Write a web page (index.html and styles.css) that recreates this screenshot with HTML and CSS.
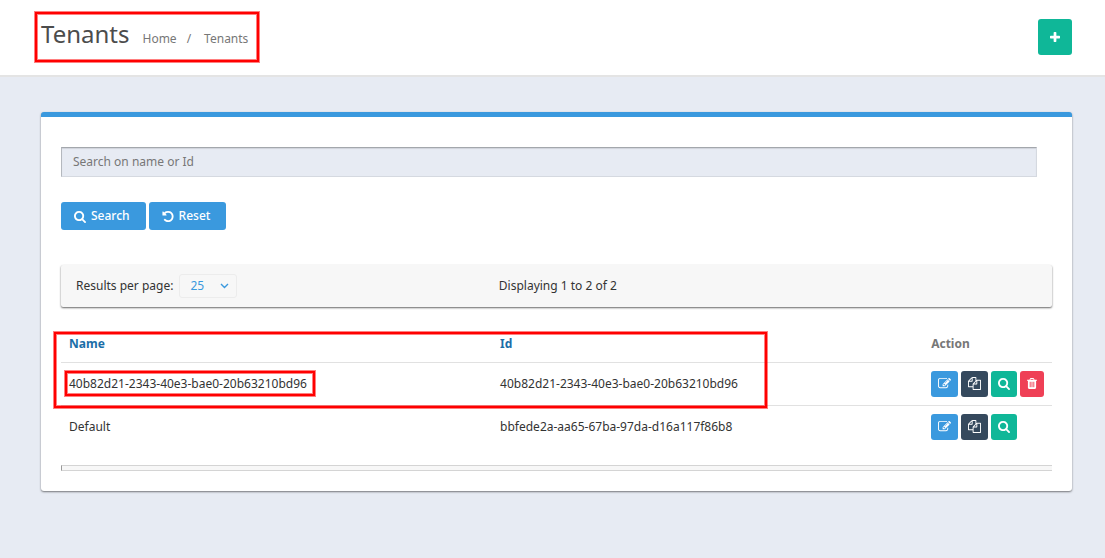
FILE: index.html
```
<!DOCTYPE html>
<html lang="en">
<head>
    <meta charset="UTF-8">
    <title>Tenants</title>
    <link rel="stylesheet" href="styles.css">
</head>
<body>

<!-- icon sprite -->
<svg class="sprite" aria-hidden="true">
    <symbol id="i-plus" viewBox="192 0 1408 1792"><path d="M1600 736v192q0 40-28 68t-68 28h-416v416q0 40-28 68t-68 28h-192q-40 0-68-28t-28-68v-416h-416q-40 0-68-28t-28-68v-192q0-40 28-68t68-28h416v-416q0-40 28-68t68-28h192q40 0 68 28t28 68v416h416q40 0 68 28t28 68z"/></symbol>
    <symbol id="i-search" viewBox="64 0 1664 1792"><path d="M1216 832q0-185-131.500-316.500t-316.500-131.500-316.500 131.500-131.500 316.500 131.500 316.500 316.500 131.500 316.500-131.500 131.500-316.500zm512 832q0 52-38 90t-90 38q-54 0-90-38l-343-342q-179 124-399 124-143 0-273.500-55.500t-225-150-150-225-55.500-273.500 55.500-273.500 150-225 225-150 273.500-55.500 273.500 55.500 225 150 150 225 55.500 273.500q0 220-124 399l343 343q37 37 37 90z"/></symbol>
    <symbol id="i-undo" viewBox="128 0 1536 1792"><path d="M1664 896q0 156-61 298t-164 245-245 164-298 61q-172 0-327-72.500t-264-204.500q-7-10-6.500-22.500t8.500-20.500l137-138q10-9 25-9 16 2 23 12 73 95 179 147t225 52q104 0 198.500-40.500t163.500-109.500 109.500-163.500 40.500-198.500-40.500-198.500-109.500-163.500-163.500-109.500-198.500-40.500q-98 0-188 35.500t-160 101.500l137 138q31 30 14 69-17 40-59 40h-448q-26 0-45-19t-19-45v-448q0-42 40-59 39-17 69 14l130 129q107-101 244.500-156.500t284.500-55.500q156 0 298 61t245 164 164 245 61 298z"/></symbol>
    <symbol id="i-edit" viewBox="0 0 1792 1792"><path d="M888 1184l116-116-152-152-116 116v56h96v96h56zm440-720q-16-16-33 1l-350 350q-17 17-1 33t33-1l350-350q17-17 1-33zm80 594v190q0 119-84.500 203.500t-203.500 84.500h-832q-119 0-203.500-84.500t-84.500-203.500v-832q0-119 84.500-203.500t203.500-84.500h832q63 0 117 25 15 7 18 23 3 17-9 29l-49 49q-14 14-32 8-23-6-45-6h-832q-66 0-113 47t-47 113v832q0 66 47 113t113 47h832q66 0 113-47t47-113v-126q0-13 9-22l64-64q15-15 35-7t20 29zm-96-738l288 288-672 672h-288v-288zm444 132l-92 92-288-288 92-92q28-28 68-28t68 28l152 152q28 28 28 68t-28 68z"/></symbol>
    <symbol id="i-copy" viewBox="0 0 1792 1792"><path d="M1696 384q40 0 68 28t28 68v1216q0 40-28 68t-68 28h-960q-40 0-68-28t-28-68v-288h-544q-40 0-68-28t-28-68v-672q0-40 20-88t48-76l408-408q28-28 76-48t88-20h416q40 0 68 28t28 68v328q68-40 128-40h416zm-544 213l-299 299h299v-299zm-640-384l-299 299h299v-299zm196 647l316-316v-416h-384v416q0 40-28 68t-68 28h-416v640h512v-256q0-40 20-88t48-76zm956 804v-1152h-384v416q0 40-28 68t-68 28h-416v640h896z"/></symbol>
    <symbol id="i-trash" viewBox="192 0 1408 1792"><path d="M704 1376v-704q0-14-9-23t-23-9h-64q-14 0-23 9t-9 23v704q0 14 9 23t23 9h64q14 0 23-9t9-23zm256 0v-704q0-14-9-23t-23-9h-64q-14 0-23 9t-9 23v704q0 14 9 23t23 9h64q14 0 23-9t9-23zm256 0v-704q0-14-9-23t-23-9h-64q-14 0-23 9t-9 23v704q0 14 9 23t23 9h64q14 0 23-9t9-23zm-544-992h448l-48-117q-7-9-17-11h-317q-10 2-17 11zm928 32v64q0 14-9 23t-23 9h-96v948q0 83-47 143.500t-113 60.500h-832q-66 0-113-58.500t-47-141.500v-952h-96q-14 0-23-9t-9-23v-64q0-14 9-23t23-9h309l70-167q15-37 54-63t79-26h320q40 0 79 26t54 63l70 167h309q14 0 23 9t9 23z"/></symbol>
</svg>

<header class="page-header">
    <div class="page-title marked marked-title">
        <h1>Tenants</h1>
        <nav class="breadcrumb">
            <a href="#">Home</a>
            <span class="sep">/</span>
            <a href="#">Tenants</a>
        </nav>
    </div>
    <button type="button" class="btn btn-green btn-add" aria-label="Add tenant"><svg class="icon icon-plus"><use href="#i-plus"/></svg></button>
</header>

<main class="panel">
    <form class="search-form">
        <input type="text" class="search-input" placeholder="Search on name or Id" aria-label="Search on name or Id">
        <div class="form-buttons">
            <button type="button" class="btn btn-blue btn-text"><svg class="icon icon-search"><use href="#i-search"/></svg>Search</button>
            <button type="reset" class="btn btn-blue btn-text"><svg class="icon icon-undo"><use href="#i-undo"/></svg>Reset</button>
        </div>
    </form>

    <div class="results-bar">
        <div class="per-page">
            <label for="pageSize">Results per page:</label>
            <div class="select-box">
                <select id="pageSize">
                    <option>25</option>
                    <option>50</option>
                    <option>100</option>
                </select>
                <svg class="chevron" viewBox="0 0 9 6"><path d="M1 1l3.500 3.500L8 1"/></svg>
            </div>
        </div>
        <div class="displaying">Displaying 1 to 2 of 2</div>
    </div>

    <div class="table-box">
        <table class="tenants">
            <thead>
            <tr>
                <th><a href="#">Name</a></th>
                <th><a href="#">Id</a></th>
                <th>Action</th>
            </tr>
            </thead>
            <tbody>
            <tr>
                <td><span class="marked marked-name">40b82d21-2343-40e3-bae0-20b63210bd96</span></td>
                <td>40b82d21-2343-40e3-bae0-20b63210bd96</td>
                <td>
                    <div class="actions">
                        <button type="button" class="btn btn-blue" aria-label="Edit"><svg class="icon"><use href="#i-edit"/></svg></button>
                        <button type="button" class="btn btn-dark" aria-label="Copy"><svg class="icon"><use href="#i-copy"/></svg></button>
                        <button type="button" class="btn btn-green" aria-label="View"><svg class="icon icon-search"><use href="#i-search"/></svg></button>
                        <button type="button" class="btn btn-red" aria-label="Delete"><svg class="icon icon-trash"><use href="#i-trash"/></svg></button>
                    </div>
                </td>
            </tr>
            <tr>
                <td>Default</td>
                <td>bbfede2a-aa65-67ba-97da-d16a117f86b8</td>
                <td>
                    <div class="actions">
                        <button type="button" class="btn btn-blue" aria-label="Edit"><svg class="icon"><use href="#i-edit"/></svg></button>
                        <button type="button" class="btn btn-dark" aria-label="Copy"><svg class="icon"><use href="#i-copy"/></svg></button>
                        <button type="button" class="btn btn-green" aria-label="View"><svg class="icon icon-search"><use href="#i-search"/></svg></button>
                    </div>
                </td>
            </tr>
            </tbody>
        </table>
        <div class="table-mark"></div>
    </div>

    <div class="panel-foot"></div>
</main>

</body>
</html>
```
FILE: styles.css
```
* {
    box-sizing: border-box;
}

body {
    margin: 0;
    background: #e7ebf3;
    color: #333;
    font-family: "Noto Sans", "Open Sans", sans-serif;
    font-size: 12px;
    line-height: 18px;
}

a {
    color: inherit;
    text-decoration: none;
}

button, input, select {
    font: inherit;
}

.sprite {
    position: absolute;
    width: 0;
    height: 0;
}

/* header */
.page-header {
    display: flex;
    align-items: flex-start;
    justify-content: space-between;
    padding: 19px 33px 20px 41px;
    background: #fff;
    border-bottom: 2px solid #e4e4e4;
}

.page-title {
    display: flex;
    align-items: baseline;
    gap: 13px;
}

.page-title h1 {
    margin: 0;
    font-size: 24px;
    font-weight: 400;
    line-height: 30px;
    color: #4c4c4c;
}

.breadcrumb {
    display: flex;
    color: #777;
}

.breadcrumb .sep {
    padding: 0 13px 0 10px;
}

/* buttons */
.btn {
    display: inline-flex;
    align-items: center;
    justify-content: center;
    height: 26px;
    padding: 0 7px;
    border: 0;
    border-radius: 3px;
    color: #fff;
    cursor: pointer;
}

.btn-blue {
    background: #3a99de;
}

.btn-dark {
    background: #35495d;
}

.btn-green {
    background: #0fb798;
}

.btn-red {
    background: #ef4056;
}

.btn-add {
    width: 34px;
    height: 36px;
}

.btn-text {
    gap: 5px;
    height: 28px;
    padding: 0 16px 0 13px;
    font-weight: 500;
}

.icon {
    display: block;
    width: 13px;
    height: 13px;
    fill: currentColor;
}

.icon-search, .icon-undo {
    width: 12px;
}

.icon-plus, .icon-trash {
    width: 10px;
}

/* panel */
.panel {
    margin: 35px 33px 35px 41px;
    padding: 30px 20px 20px;
    background: #fff;
    border-top: 5px solid #3a99de;
    border-radius: 3px;
    box-shadow: 0 1px 2px rgba(0, 0, 0, 0.5);
}

.search-form {
    padding-right: 15px;
}

.search-input {
    display: block;
    width: 100%;
    height: 30px;
    padding: 0 11px 2px;
    border: 1px solid #d5d9e0;
    border-top-color: #a3a7ac;
    border-left-color: #b4b8be;
    background: #e7ebf3;
    box-shadow: inset 0 1px 1px rgba(0, 0, 0, 0.1);
    color: #333;
}

.search-input::placeholder {
    color: #777;
    opacity: 1;
}

.form-buttons {
    display: flex;
    gap: 3px;
    margin-top: 25px;
}

/* results bar */
.results-bar {
    display: grid;
    grid-template-columns: 44% 1fr;
    align-items: center;
    margin-top: 35px;
    padding: 9px 15px;
    background: #f7f7f7;
    border-radius: 2px;
    box-shadow: 0 1px 2px rgba(0, 0, 0, 0.6);
}

.per-page {
    display: flex;
    align-items: center;
    gap: 6px;
}

.select-box {
    position: relative;
}

.select-box select {
    display: block;
    width: 58px;
    height: 24px;
    padding: 0 10px;
    appearance: none;
    border: 1px solid #ececec;
    border-radius: 3px;
    background: #f7f7f7;
    color: #3a99de;
}

.chevron {
    position: absolute;
    top: 9px;
    right: 8px;
    width: 9px;
    height: 6px;
    fill: none;
    stroke: #3a99de;
    stroke-width: 1.4;
    pointer-events: none;
}

/* table */
.table-box {
    position: relative;
    margin-top: 20px;
}

.tenants {
    width: 100%;
    table-layout: fixed;
    border-collapse: collapse;
}

.tenants th {
    width: 43.5%;
    height: 35px;
    padding: 8px;
    text-align: left;
    vertical-align: top;
    color: #777;
}

.tenants th:last-child {
    width: auto;
}

.tenants th a {
    color: #1a6ea8;
}

.tenants td {
    height: 43px;
    padding: 8px;
    border-top: 1px solid #e1e1e1;
}

.actions {
    display: flex;
    gap: 3px;
}

.panel-foot {
    height: 6px;
    margin-top: 17px;
    background: #f7f7f7;
    border: solid #d4d4d4;
    border-width: 1px 0 1px 1px;
    border-left-color: #999;
}

/* red frames */
.marked {
    position: relative;
}

.marked::after, .table-mark {
    content: "";
    position: absolute;
    border: 2px solid #f00;
    box-shadow: 0 0 0 1px rgba(255, 0, 0, 0.5), inset 0 0 0 1px rgba(255, 0, 0, 0.5);
    pointer-events: none;
}

.marked-title::after {
    inset: -7px -11px -13px -6px;
}

.marked-name::after {
    inset: -4px -8px -4px -4px;
}

.table-mark {
    top: 5px;
    left: -7px;
    width: 713px;
    height: 76px;
}
```
